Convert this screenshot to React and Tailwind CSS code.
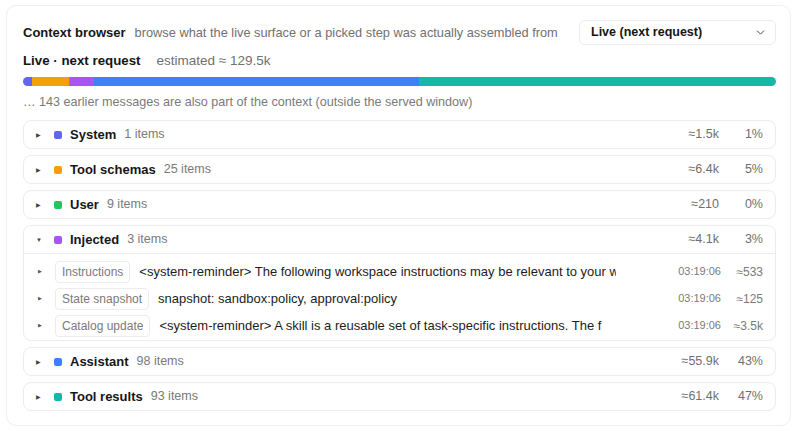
import { ChevronDown } from 'lucide-react'

// token buckets for the live request
const GROUPS = [
  { name: 'System', count: 1, tokens: 1.5, est: '≈1.5k', pct: '1%', color: 'bg-[#6366f1]' },
  { name: 'Tool schemas', count: 25, tokens: 6.4, est: '≈6.4k', pct: '5%', color: 'bg-[#f59e0b]' },
  { name: 'User', count: 9, tokens: 0.21, est: '≈210', pct: '0%', color: 'bg-[#22c55e]' },
  {
    name: 'Injected', count: 3, tokens: 4.1, est: '≈4.1k', pct: '3%', color: 'bg-[#a855f7]', open: true,
    items: [
      { tag: 'Instructions', text: '<system-reminder> The following workspace instructions may be relevant to your w', time: '03:19:06', est: '≈533' },
      { tag: 'State snapshot', text: 'snapshot: sandbox:policy, approval:policy', time: '03:19:06', est: '≈125' },
      { tag: 'Catalog update', text: '<system-reminder> A skill is a reusable set of task-specific instructions. The f', time: '03:19:06', est: '≈3.5k' }
    ]
  },
  { name: 'Assistant', count: 98, tokens: 55.9, est: '≈55.9k', pct: '43%', color: 'bg-[#3b82f6]' },
  { name: 'Tool results', count: 93, tokens: 61.4, est: '≈61.4k', pct: '47%', color: 'bg-[#14b8a6]' }
]

function GroupRow({ group }) {
  return (
    <div className="rounded-lg border border-[#ececec] bg-white">
      <div className="flex h-[27px] items-center pl-[12px] pr-[12px]">
        <span className="w-[18px] text-[6px] leading-none text-[#444]">{group.open ? '▼' : '▶'}</span>
        <span className={`h-[8px] w-[8px] rounded-[2px] ${group.color}`} />
        <span className="ml-[8px] text-[13px] font-bold text-[#161616]">{group.name}</span>
        <span className="ml-[8px] text-[12.5px] text-[#7a7a7a]">{group.count} items</span>
        <span className="ml-auto text-[12.5px] text-[#6f6f6f]">{group.est}</span>
        <span className="w-[44px] text-right text-[12.5px] text-[#6f6f6f]">{group.pct}</span>
      </div>
      {group.open && (
        <div className="border-t border-[#ececec] pb-[1px] pt-[4px]">
          {group.items.map(item => (
            <div key={item.tag} className="flex h-[27px] items-center pl-[14px] pr-[12px]">
              <span className="w-[17px] shrink-0 text-[5px] leading-none text-[#555]">▶</span>
              <span className="shrink-0 rounded-[4px] border border-[#ececec] px-[6px] py-[1px] text-[12px] text-[#7a7a7a]">{item.tag}</span>
              <span className="ml-[9px] min-w-0 flex-1 overflow-hidden whitespace-nowrap text-[13px] text-[#1c1c1c]">{item.text}</span>
              <span className="shrink-0 pl-[62px] text-[11px] text-[#7a7a7a]">{item.time}</span>
              <span className="w-[42px] shrink-0 text-right text-[12px] text-[#7a7a7a]">{item.est}</span>
            </div>
          ))}
        </div>
      )}
    </div>
  )
}

export default function App() {
  return (
    <div className="min-h-screen bg-white px-[6px] py-[5px] font-['Liberation_Sans',Arial,sans-serif]">
      <div className="rounded-[10px] border border-[#efefef] pb-[14px] pl-[16px] pr-[14px] pt-[14px]">
        {/* Header */}
        <div className="flex items-center whitespace-nowrap">
          <span className="text-[13px] font-bold text-[#161616]">Context browser</span>
          <span className="ml-[9px] text-[12.8px] text-[#707070]">browse what the live surface or a picked step was actually assembled from</span>
          <div className="ml-auto flex h-[25px] w-[197px] shrink-0 items-center rounded-md border border-[#ececec] pl-[11px] pr-[8px]">
            <span className="text-[12.5px] font-bold text-[#161616]">Live (next request)</span>
            <ChevronDown className="ml-auto h-[13px] w-[13px] text-[#444]" strokeWidth={1.75} />
          </div>
        </div>

        {/* Live summary */}
        <div className="mt-[6px] flex items-center">
          <span className="text-[13.3px] font-bold text-[#161616]">Live · next request</span>
          <span className="ml-[16px] text-[13.5px] text-[#707070]">estimated ≈ 129.5k</span>
        </div>

        <div className="mt-[6px] flex h-[9px] overflow-hidden rounded-full">
          {GROUPS.map(g => (
            <div key={g.name} className={g.color} style={{ flexGrow: g.tokens, flexBasis: 0 }} />
          ))}
        </div>

        <div className="mt-[7px] text-[12.6px] text-[#7a7a7a]">… 143 earlier messages are also part of the context (outside the served window)</div>

        {/* Groups */}
        <div className="mt-[8px] flex flex-col gap-[6px]">
          {GROUPS.map(g => (
            <GroupRow key={g.name} group={g} />
          ))}
        </div>
      </div>
    </div>
  )
}
